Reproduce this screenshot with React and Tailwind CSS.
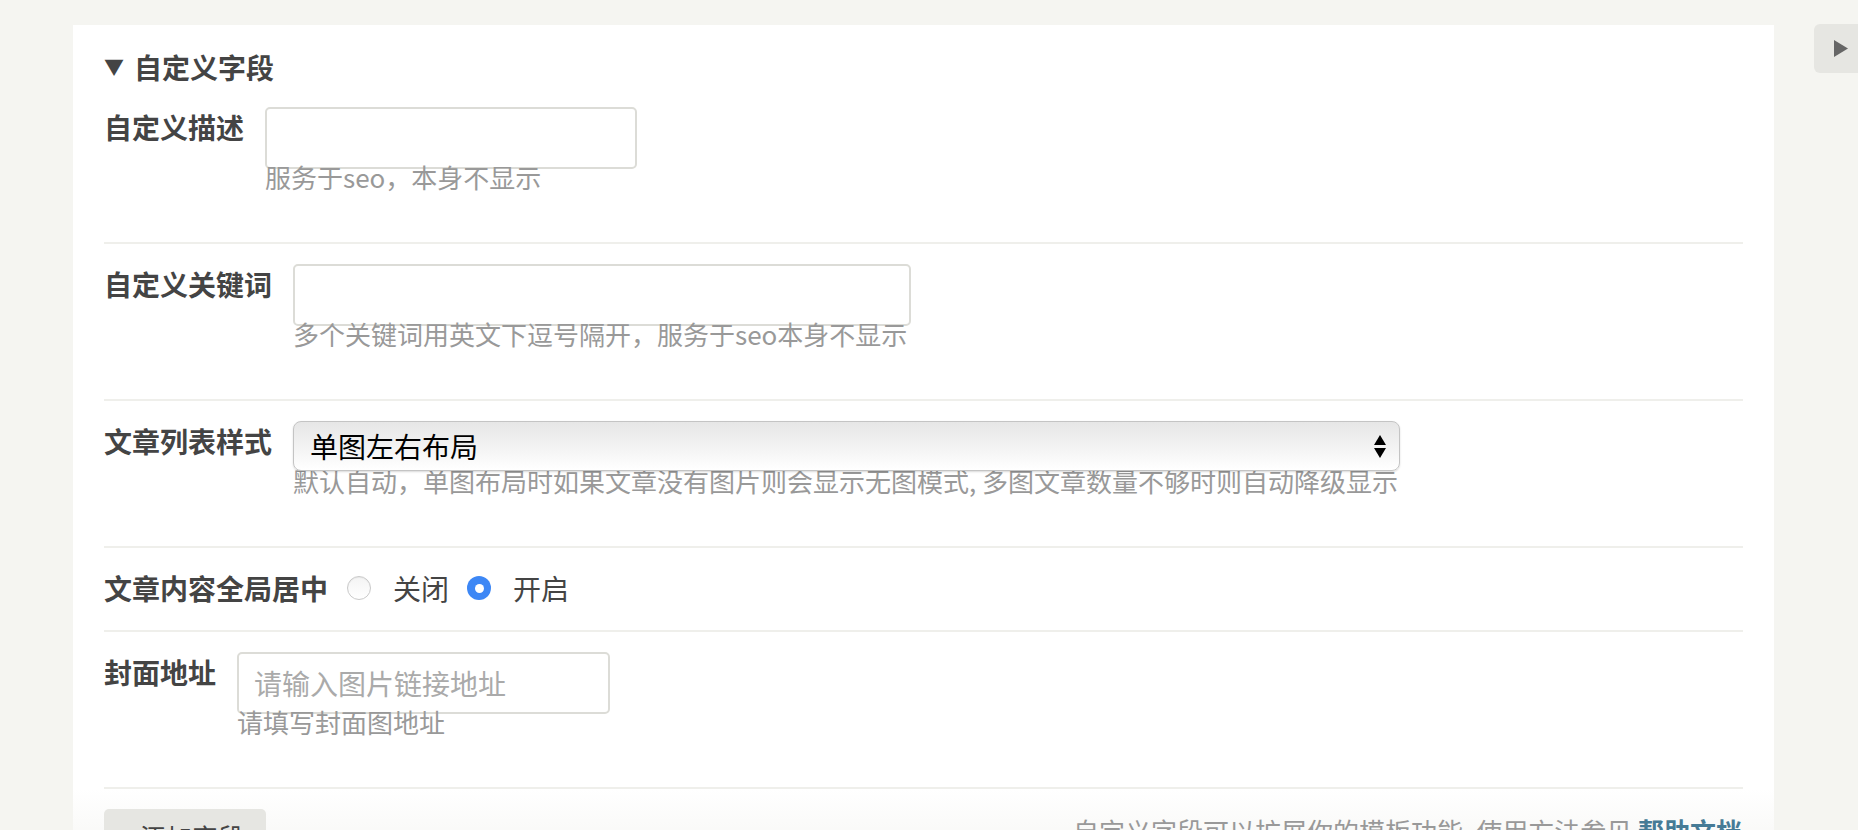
import React, { useState } from "react";

const font = "font-['Noto_Sans_CJK_SC',sans-serif]";

function Label({ children, className = "mr-[21px]" }) {
	return <label className={"shrink-0 text-[28px] leading-[40px] font-bold text-[#444] " + className}>{children}</label>;
}

function Hint({ children, className = "" }) {
	return <p className={"text-[26px] leading-[36px] text-[#999] whitespace-nowrap " + className}>{children}</p>;
}

function Radio({ checked, onClick, label }) {
	return (
		<button type="button" onClick={onClick} className="flex items-center">
			{checked ? (
				<span className="w-[24px] h-[24px] rounded-full bg-[#3d87f5] flex items-center justify-center">
					<span className="w-[9px] h-[9px] rounded-full bg-white" />
				</span>
			) : (
				<span className="w-[24px] h-[24px] rounded-full border border-[#c9c9c9] bg-gradient-to-b from-[#f4f4f4] to-white shadow-[inset_0_1px_1px_rgba(0,0,0,0.05)]" />
			)}
			<span className="ml-[22px] text-[28px] leading-[40px] text-[#444]">{label}</span>
		</button>
	);
}

const rowCls = "flex items-start border-b-2 border-[#efefeb] pt-[20px]";
const inputCls = "block h-[62px] border-2 border-[#dcdcd7] rounded-[5px] bg-white px-[15px] text-[28px] text-[#333] outline-none placeholder:text-[#aaa]";

export default function App() {
	const [center, setCenter] = useState("on");
	const [style, setStyle] = useState("single");

	return (
		<div className={"w-[1858px] h-[830px] overflow-hidden bg-[#f5f5f1] flex items-start " + font}>
			<div className="ml-[73px] mt-[25px] w-[1701px] shrink-0 bg-white px-[31px]">
				<div className="pt-[22px] flex items-center h-[62px] text-[28px] font-bold text-[#444]">
					<span className="text-[20px] mr-[10px] text-[#444]">▼</span>
					<span className="leading-[40px]">自定义字段</span>
				</div>

				<div className={rowCls + " pb-[47px]"}>
					<Label>自定义描述</Label>
					<div>
						<input className={inputCls + " w-[372px]"} />
						<Hint className="-mt-[10px]">服务于seo，本身不显示</Hint>
					</div>
				</div>

				<div className={rowCls + " pb-[47px]"}>
					<Label>自定义关键词</Label>
					<div>
						<input className={inputCls + " w-[618px]"} />
						<Hint className="-mt-[10px]">多个关键词用英文下逗号隔开，服务于seo本身不显示</Hint>
					</div>
				</div>

				<div className={rowCls + " pb-[47px]"}>
					<Label>文章列表样式</Label>
					<div>
						<div className="relative w-[1107px] h-[50px] rounded-[8px] border border-[#c4c4c4] bg-gradient-to-b from-[#e6e6e6] to-white shadow-[0_1px_2px_rgba(0,0,0,0.15)]">
							<select value={style} onChange={(e) => setStyle(e.target.value)} className="appearance-none w-full h-full bg-transparent pl-[16px] pr-[40px] text-[28px] text-black outline-none">
								<option value="single">单图左右布局</option>
								<option value="auto">默认自动</option>
								<option value="multi">多图布局</option>
								<option value="none">无图模式</option>
							</select>
							<span className="pointer-events-none absolute right-[13px] top-[13px] flex flex-col items-center">
								<svg width="12" height="10" viewBox="0 0 12 10"><path d="M6 0 L12 10 L0 10 Z" fill="#000" /></svg>
								<svg width="12" height="10" viewBox="0 0 12 10" className="mt-[3px]"><path d="M0 0 L12 0 L6 10 Z" fill="#000" /></svg>
							</span>
						</div>
						<Hint className="-mt-[8px]">默认自动，单图布局时如果文章没有图片则会显示无图模式, 多图文章数量不够时则自动降级显示</Hint>
					</div>
				</div>

				<div className={rowCls + " pb-[22px] items-center"}>
					<Label className="mr-[19px]">文章内容全局居中</Label>
					<div className="flex items-center gap-[18px]">
						<Radio checked={center === "off"} onClick={() => setCenter("off")} label="关闭" />
						<Radio checked={center === "on"} onClick={() => setCenter("on")} label="开启" />
					</div>
				</div>

				<div className={rowCls + " pb-[47px]"}>
					<Label>封面地址</Label>
					<div>
						<input className={inputCls + " w-[373px]"} placeholder="请输入图片链接地址" />
						<Hint className="-mt-[10px]">请填写封面图地址</Hint>
					</div>
				</div>

				<div className="-mx-[31px] px-[31px] pt-[20px] pb-[20px] bg-gradient-to-b from-white to-[#f3f3f0] flex items-start justify-between">
					<button type="button" className="w-[162px] h-[56px] rounded-[5px] bg-[#e6e6e2] pl-[36px] text-left text-[26px] leading-[40px] text-[#444]">
						添加字段
					</button>
					<p className="mr-[1px] pt-[2px] text-[26px] leading-[40px] text-[#999]">
						自定义字段可以扩展你的模板功能, 使用方法参见 <a href="#" className="text-[#467b96] font-bold">帮助文档</a>
					</p>
				</div>
			</div>

			<button type="button" className="ml-auto mt-[24px] w-[44px] h-[49px] rounded-l-[6px] bg-[#e6e6e2] flex items-center pl-[20px]">
				<svg width="14" height="17" viewBox="0 0 14 17"><path d="M0 0 L14 8.5 L0 17 Z" fill="#666" /></svg>
			</button>
		</div>
	);
}
